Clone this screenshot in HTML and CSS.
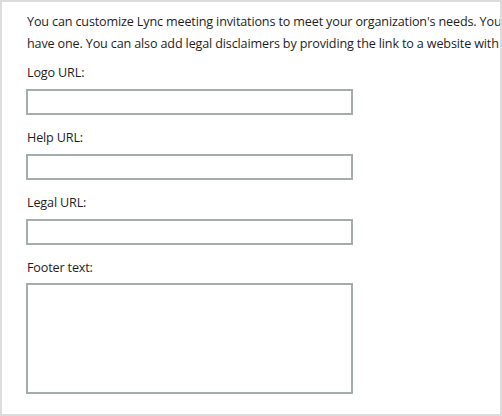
FILE: index.html
```html
<!DOCTYPE html>
<html>
<head>
<meta charset="utf-8">
<link rel="stylesheet" href="styles.css">
</head>
<body>
<div class="frame">
  <p class="intro">You can customize Lync meeting invitations to meet your organization's needs. You<br>have one. You can also add legal disclaimers by providing the link to a website with</p>
  <div class="field">
    <label class="label">Logo URL:</label>
    <div class="input"></div>
  </div>
  <div class="field">
    <label class="label">Help URL:</label>
    <div class="input"></div>
  </div>
  <div class="field">
    <label class="label">Legal URL:</label>
    <div class="input"></div>
  </div>
  <div class="field">
    <label class="label">Footer text:</label>
    <div class="input textarea"></div>
  </div>
</div>
</body>
</html>
```
FILE: styles.css
```css
html, body {
  margin: 0;
  padding: 0;
  background: #ffffff;
  overflow: hidden;
}
.frame {
  box-sizing: border-box;
  width: 502px;
  height: 416px;
  border: 2px solid #dcdcdc;
  padding: 9px 0 0 24px;
  overflow: hidden;
  font-family: "Open Sans", "Noto Sans", sans-serif;
  font-size: 12.6px;
  letter-spacing: -0.15px;
  color: #1e1e1e;
}
.intro {
  margin: 0 0 6px 0;
  padding-left: 1px;
  white-space: nowrap;
  line-height: 22px;
}
.field {
  display: flex;
  flex-direction: column;
  gap: 5px;
  margin-bottom: 11px;
}
.label {
  display: block;
  padding: 1px 0 0 1px;
  line-height: 22px;
}
.input {
  box-sizing: border-box;
  width: 327px;
  height: 26px;
  border: 2px solid #a4adad;
  background: #ffffff;
}
.textarea {
  height: 111px;
  margin-top: -1px;
}
```
